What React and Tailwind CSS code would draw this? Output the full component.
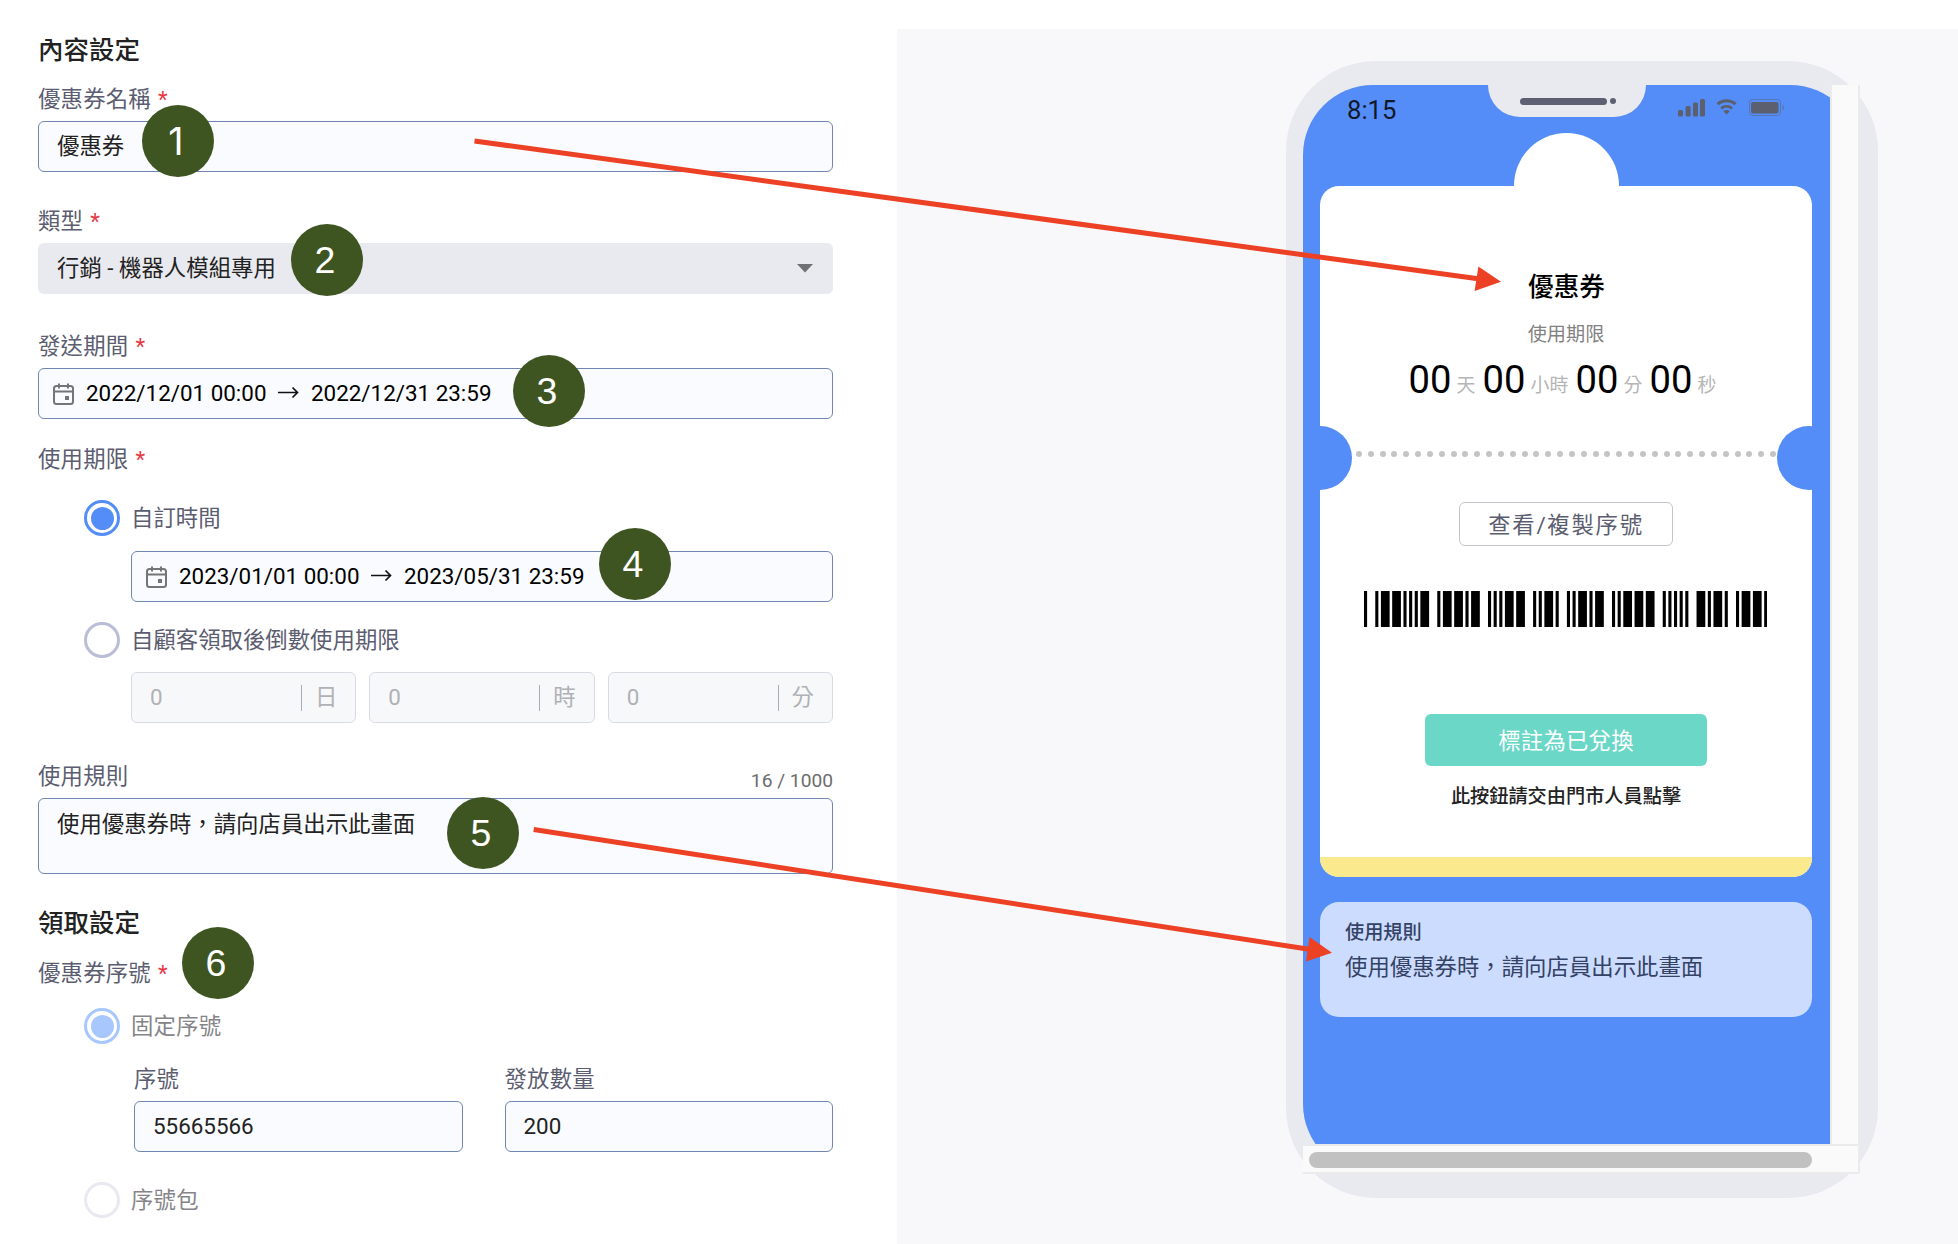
import React from "react";

const BARCODE = ["n", "nWWnnnW", "nWWnW", "nnnWW", "nnWn", "nnWnW", "nnWWW", "nnnnn", "WnWn", "nWWn"];

function Heading({ children, className = "" }) {
  return <h2 className={`h-9 pt-px text-[25.5px] leading-9 font-medium text-[#222] ${className}`}>{children}</h2>;
}

function Label({ children, required, className = "" }) {
  return (
    <div className={`h-[30px] text-[22.4px] leading-[30px] tracking-[0.2px] whitespace-nowrap text-[#5b5d70] ${className}`}>
      {children}
      {required && <span className="ml-[7px] text-[#e63946]">*</span>}
    </div>
  );
}

const FIELD = "flex items-center rounded-[6px] border border-[#7286b3] bg-[#fafbfe] text-[22.4px] text-[#222]";

function CalendarIcon() {
  return (
    <svg width="21" height="22" viewBox="0 0 21 22" fill="none" stroke="#757575" strokeWidth="2">
      <rect x="1" y="3" width="19" height="18" rx="2.5" />
      <path d="M1 8.6h19M6 0.5v5M15 0.5v5" />
      <rect x="12" y="13" width="4" height="4" fill="#757575" stroke="none" />
    </svg>
  );
}

function DateRange({ from, to, className = "" }) {
  return (
    <div className={`${FIELD} h-[51px] pl-[14px] !text-black ${className}`}>
      <CalendarIcon />
      <span className="ml-3 w-[180px] whitespace-nowrap">{from}</span>
      <svg className="ml-3 mr-3 -mt-px" width="21" height="14" viewBox="0 0 21 14" fill="none" stroke="#111" strokeWidth="1.7">
        <path d="M0 6.5h19.5M14.5 1.5l5 5L14.5 11.5" />
      </svg>
      <span className="whitespace-nowrap">{to}</span>
    </div>
  );
}

function Radio({ ring, dot, text, children, className = "" }) {
  return (
    <div className={`ml-[46px] flex h-9 items-center ${className}`}>
      <span className={`flex size-9 items-center justify-center rounded-full border-[3px] bg-white ${ring}`}>
        {dot && <span className={`size-[23px] rounded-full ${dot}`} />}
      </span>
      <span className={`ml-[11px] text-[22.4px] leading-9 whitespace-nowrap ${text}`}>{children}</span>
    </div>
  );
}

function UnitBox({ unit }) {
  return (
    <div className="flex h-[51px] items-center rounded-[6px] border border-[#d9dbe2] bg-[#f7f8fa] pl-[18px] pr-[18px] text-[22.4px] text-[#b0b1b5]">
      <span className="flex-1">0</span>
      <span className="h-[26px] w-px bg-[#a9abb5]" />
      <span className="ml-[13px]">{unit}</span>
    </div>
  );
}

function SettingsForm() {
  return (
    <section className="w-[897px] shrink-0 pt-[31px] pl-[38px]">
      <div className="w-[795px]">
        <Heading>內容設定</Heading>
        <Label required className="mt-[17px]">優惠券名稱</Label>
        <div className={`${FIELD} mt-[7px] h-[51px] pl-[18px]`}>優惠券</div>
        <Label required className="mt-[34px]">類型</Label>
        <div className="mt-[7px] flex h-[51px] items-center justify-between rounded-[6px] bg-[#e9eaef] pr-[20px] pl-[19px] text-[22.4px] text-[#222]">
          <span>行銷 - 機器人模組專用</span>
          <svg width="16" height="9" viewBox="0 0 16 9"><path d="M0 0h16L8 8.5z" fill="#6f7074" /></svg>
        </div>
        <Label required className="mt-[37px]">發送期間</Label>
        <DateRange className="mt-[7px]" from="2022/12/01 00:00" to="2022/12/31 23:59" />
        <Label required className="mt-[25px]">使用期限</Label>
        <Radio className="mt-[26px]" ring="border-[#548df7]" dot="bg-[#548df7]" text="text-[#5b5d70]">自訂時間</Radio>
        <DateRange className="mt-[15px] ml-[93px]" from="2023/01/01 00:00" to="2023/05/31 23:59" />
        <Radio className="mt-[20px]" ring="border-[#b9bdd6]" text="text-[#5b5d70]">自顧客領取後倒數使用期限</Radio>
        <div className="mt-[14px] ml-[93px] grid grid-cols-3 gap-[13px]">
          <UnitBox unit="日" />
          <UnitBox unit="時" />
          <UnitBox unit="分" />
        </div>
        <div className="mt-[38px] flex h-[30px] justify-between">
          <Label>使用規則</Label>
          <span className="mt-[5px] text-[19.2px] leading-[30px] text-[#6c6c6c]">16 / 1000</span>
        </div>
        <div className={`${FIELD} mt-[7px] h-[76px] !items-start pt-[7px] pl-[18px] leading-9`}>使用優惠券時，請向店員出示此畫面</div>
        <Heading className="mt-[30px]">領取設定</Heading>
        <Label required className="mt-[18px]">優惠券序號</Label>
        <Radio className="mt-[20px]" ring="border-[#a8c7fd]" dot="bg-[#a8c7fd]" text="text-[#858589] tracking-[0.2px]">固定序號</Radio>
        <div className="mt-[20px] ml-[96px] grid grid-cols-2 gap-[42px]">
          <div>
            <Label>序號</Label>
            <div className={`${FIELD} mt-[7px] h-[51px] pl-[18px]`}>55665566</div>
          </div>
          <div>
            <Label>發放數量</Label>
            <div className={`${FIELD} mt-[7px] h-[51px] pl-[18px]`}>200</div>
          </div>
        </div>
        <Radio className="mt-[30px]" ring="border-[#e9eaf1]" text="text-[#858589] tracking-[0.2px]">序號包</Radio>
      </div>
    </section>
  );
}

function Barcode() {
  const bars = [];
  let x = 0;
  BARCODE.forEach((group) => {
    group.split("").forEach((bar) => {
      const w = bar === "W" ? 3 : 1;
      bars.push(<rect key={x} x={x} y="0" width={w + 0.1} height="36" />);
      x += w + 1;
    });
    x += 2;
  });
  return (
    <svg className="mt-[45px] mr-[2px]" width="403" height="36" viewBox="0 0 143 36" preserveAspectRatio="none">
      {bars}
    </svg>
  );
}

function StatusBar() {
  return (
    <div className="relative h-[101px] w-[527px]">
      <span className="absolute top-[9px] left-[44px] text-[25.6px] leading-8 text-[#111827]">8:15</span>
      <div className="absolute top-0 left-[185px] flex h-8 w-[158px] justify-center gap-[3px] rounded-b-[38px] bg-[#e9eaef] pt-[13px] pl-[2px]">
        <span className="h-[7px] w-[87px] rounded-full bg-[#5d6073]" />
        <span className="size-[6px] rounded-full bg-[#5d6073]" />
      </div>
      <svg className="absolute top-[13px] left-[374px]" width="110" height="24" viewBox="0 0 110 24" fill="#5c5f6d">
        <rect x="1" y="12" width="5" height="6.5" rx="1.6" />
        <rect x="8.6" y="8" width="5" height="10.5" rx="1.6" />
        <rect x="16" y="4.5" width="5" height="14" rx="1.6" />
        <rect x="23" y="1" width="5" height="17.5" rx="1.6" />
        <g fill="none" stroke="#5c5f6d" strokeWidth="2.9">
          <path d="M40.6 6.2a13.6 13.6 0 0 1 18 0" />
          <path d="M44.2 10.3a8.6 8.6 0 0 1 10.8 0" />
        </g>
        <path d="M46.4 13.2a5.4 5.4 0 0 1 6.4 0L49.6 16.6z" />
        <rect x="72.5" y="1.5" width="31" height="16" rx="3" fill="none" stroke="#5c5f6d" strokeOpacity="0.5" />
        <rect x="74" y="4" width="27.5" height="11.5" rx="2" />
        <path d="M105.5 6.5c2 1 2 5 0 6z" opacity="0.5" />
      </svg>
    </div>
  );
}

function CountUnit({ children, className = "" }) {
  return <span className={`relative -top-px text-[18.9px] leading-[44px] text-[#b5b5b5] ${className}`}>{children}</span>;
}

function Ticket() {
  return (
    <div className="relative ml-[17px] w-[492px]">
      <div className="absolute -top-[53px] left-[194px] size-[105px] rounded-full bg-white" />
      <div className="relative flex h-[691px] flex-col items-center overflow-hidden rounded-[19px] bg-white pt-[83px]">
        <div className="h-9 pl-px text-[25.6px] leading-9 font-medium text-black">優惠券</div>
        <div className="mt-[16px] h-7 text-[19.2px] leading-7 text-[#828282]">使用期限</div>
        <div className="mt-[9px] mr-[7px] flex h-11 items-baseline text-[38.2px] leading-[44px] whitespace-nowrap text-black">
          <span className="w-[42px]">00</span>
          <CountUnit className="ml-[6px] w-[26px]">天</CountUnit>
          <span className="w-[42px]">00</span>
          <CountUnit className="ml-[6px] w-[45px]">小時</CountUnit>
          <span className="w-[42px]">00</span>
          <CountUnit className="ml-[6px] w-[26px]">分</CountUnit>
          <span className="w-[42px]">00</span>
          <CountUnit className="ml-[6px]">秒</CountUnit>
        </div>
        <div className="mt-[24px] mr-[3px] flex h-16 w-[553px] shrink-0 justify-between">
          <span className="size-16 rounded-full bg-[#548df7]" />
          <div className="mt-[25px] ml-[3px] flex h-[6px] w-[420px] justify-between">
            {Array.from({ length: 36 }, (_, i) => (
              <span key={i} className="size-[6px] rounded-full bg-[#c4c4c4]" />
            ))}
          </div>
          <span className="size-16 rounded-full bg-[#548df7]" />
        </div>
        <button className="mt-3 h-11 w-[214px] rounded-[6px] border border-[#c4c5ca] pt-px text-[22.4px] leading-[42px] tracking-[1.7px] text-[#5b5d70]">查看/複製序號</button>
        <Barcode />
        <button className="mt-[87px] h-[52px] w-[282px] rounded-[6px] bg-[#6bd7c7] pt-px text-[22.4px] leading-[52px] tracking-[0.2px] text-white">標註為已兌換</button>
        <div className="mt-[17px] h-7 text-[19.2px] leading-7 font-medium text-[#222]">此按鈕請交由門市人員點擊</div>
        <div className="mt-auto h-5 w-full shrink-0 bg-[#fbe98e]" />
      </div>
    </div>
  );
}

function PhonePreview() {
  return (
    <section className="mt-[29px] flex-1 bg-[#f8f8fb] pt-8 pl-[389px]">
      <div className="h-[1137px] w-[592px] rounded-[90px] bg-[#e9eaef] pt-6 pl-[17px]">
        <div className="grid w-[557px] grid-cols-[527px_30px] grid-rows-[1059px_30px]">
          <div className="overflow-hidden">
            <div className="h-[1089px] w-[557px] overflow-hidden rounded-[70px] bg-[#548df7]">
              <StatusBar />
              <Ticket />
              <div className="mt-[25px] ml-[17px] h-[115px] w-[492px] rounded-[19px] bg-[#ccdcfe] pt-[17px] pl-[25px] text-[#344265]">
                <div className="h-7 text-[19.2px] leading-7 font-medium">使用規則</div>
                <div className="mt-[2px] text-[22.4px] leading-9">使用優惠券時，請向店員出示此畫面</div>
              </div>
            </div>
          </div>
          <div className="border-x-2 border-[#ebebeb] bg-[#fafafa]" />
          <div className="col-span-2 flex border-y-2 border-r-2 border-[#ebebeb] bg-[#fafafa] pt-[6px] pl-[6px]">
            <span className="h-4 w-[503px] rounded-full bg-[#c1c1c1]" />
          </div>
        </div>
      </div>
    </section>
  );
}

function Badge({ children, className, font = "font-['Liberation_Sans',sans-serif]" }) {
  return (
    <span className={`absolute flex size-[72px] items-center justify-center rounded-full bg-[#3f5521] pt-[2px] pr-[3px] text-[37.5px] leading-none text-white ${font} ${className}`}>
      {children}
    </span>
  );
}

function Annotations() {
  return (
    <div className="pointer-events-none absolute inset-0">
      <Badge className="top-[105px] left-[141.5px]" font="font-[Inter,sans-serif]">1</Badge>
      <Badge className="top-[224px] left-[290.5px]">2</Badge>
      <Badge className="top-[355px] left-[512.5px]">3</Badge>
      <Badge className="top-[528px] left-[598.5px]">4</Badge>
      <Badge className="top-[797px] left-[446.5px]">5</Badge>
      <Badge className="top-[927px] left-[181.5px]">6</Badge>
      <svg className="absolute inset-0" width="1958" height="1244" fill="#ec4125" stroke="none">
        <path d="M474.5 141L1478 278.8" stroke="#ec4125" strokeWidth="5" />
        <path d="M1501 281.8L1478.4 266.6L1474.6 291z" />
        <path d="M533.7 829.5L1309 949.3" stroke="#ec4125" strokeWidth="5" />
        <path d="M1332 952.8L1309.5 937L1306 961.5z" />
      </svg>
    </div>
  );
}

export default function App() {
  return (
    <main className="relative flex h-[1244px] w-[1958px] overflow-hidden bg-white font-[Roboto,'Noto_Sans_CJK_TC',sans-serif]">
      <SettingsForm />
      <PhonePreview />
      <Annotations />
    </main>
  );
}
